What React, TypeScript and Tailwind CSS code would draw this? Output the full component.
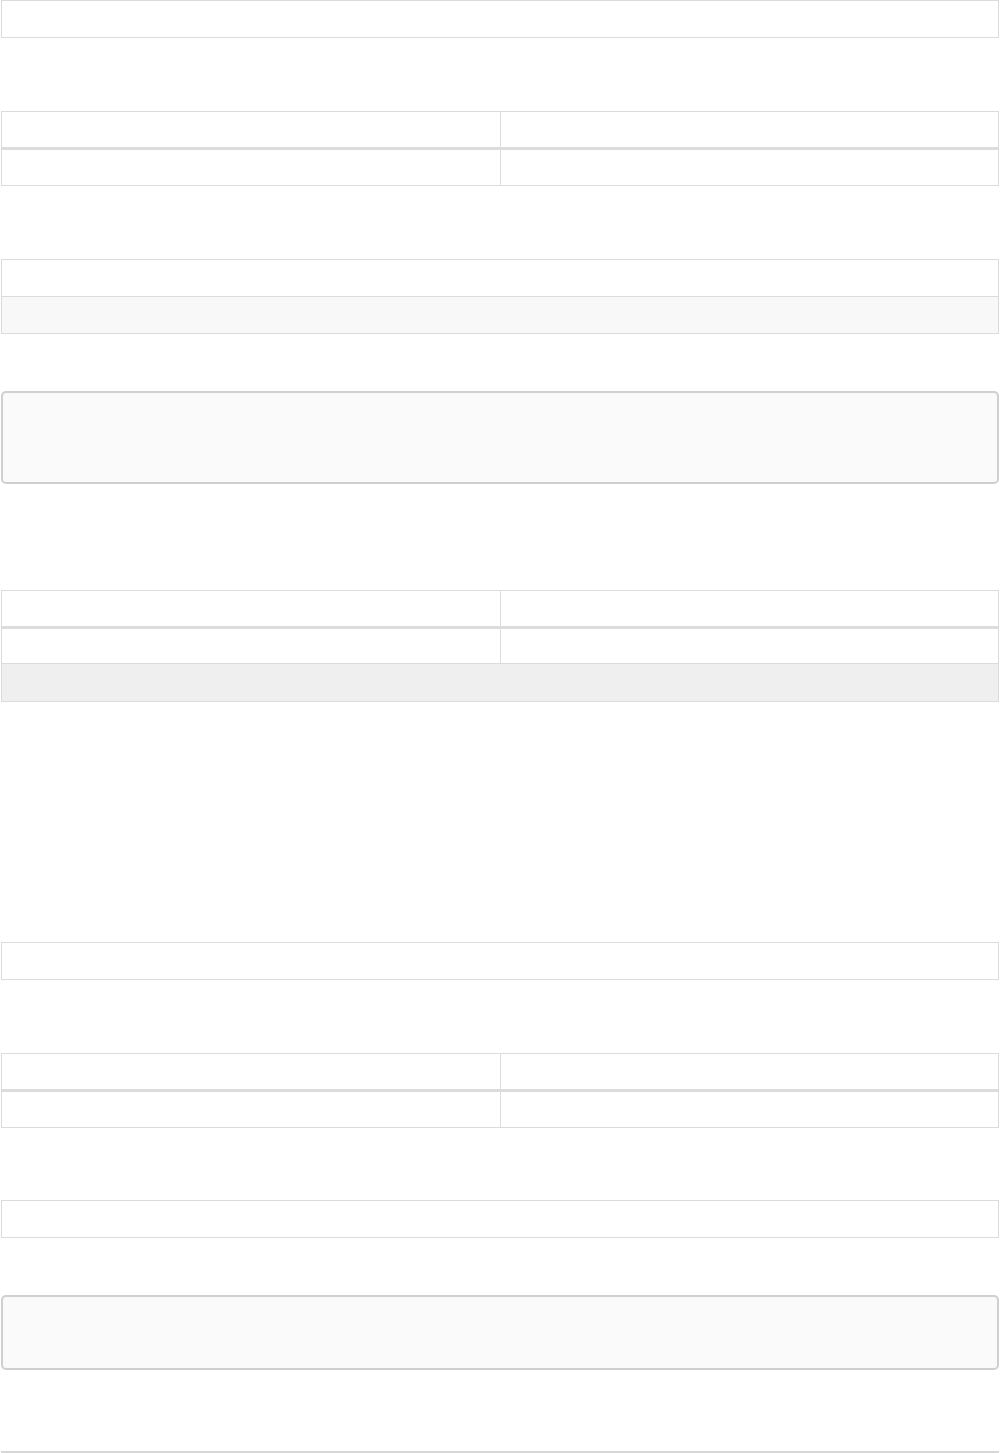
import React from 'react';

const Row: React.FC<{ cols?: number; className?: string }> = ({ cols = 2, className = '' }) => (
  <div className={`flex ${className}`}>
    {Array.from({ length: cols }).map((_, i) => (
      <div key={i} className={`flex-1 ${i > 0 ? 'border-l border-[#dcdcdc]' : ''}`} />
    ))}
  </div>
);

const Single: React.FC = () => <div className="h-[38px] border border-[#dcdcdc] bg-white" />;

const HeadTable: React.FC = () => (
  <div className="border border-[#dcdcdc]">
    <Row className="h-[38px] border-b-[3px] border-[#dcdcdc]" />
    <Row className="h-[35px]" />
  </div>
);

const Note: React.FC<{ h: string }> = ({ h }) => (
  <div className={`${h} rounded-[5px] border-2 border-[#cfcfcf] bg-[#fafafa]`} />
);

const App: React.FC = () => {
  return (
    <div className="min-h-[1453px] bg-white px-px font-['Liberation_Sans',sans-serif]">
      <Single />

      <div className="mt-[73px]">
        <HeadTable />
      </div>

      <div className="mt-[73px] border border-[#dcdcdc]">
        <Row cols={1} className="h-[37px] border-b border-[#dcdcdc]" />
        <Row cols={1} className="h-[36px] bg-[#f8f8f8]" />
      </div>

      <div className="mt-[57px]">
        <Note h="h-[93px]" />
      </div>

      <div className="mt-[106px] border border-[#dcdcdc]">
        <Row className="h-[38px] border-b-[3px] border-[#dcdcdc]" />
        <Row className="h-[35px] border-b border-[#dcdcdc]" />
        <Row cols={1} className="h-[37px] bg-[#efefef]" />
      </div>

      <div className="mt-[240px]">
        <Single />
      </div>

      <div className="mt-[73px]">
        <HeadTable />
      </div>

      <div className="mt-[72px]">
        <Single />
      </div>

      <div className="mt-[57px]">
        <Note h="h-[75px]" />
      </div>

      <div className="mt-[81px] border-t-2 border-[#d6d6d6]" />
    </div>
  );
};

export default App;
